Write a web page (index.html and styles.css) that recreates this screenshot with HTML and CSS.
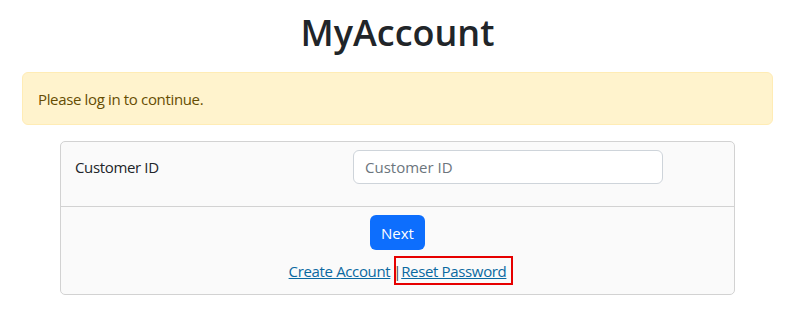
FILE: index.html
```html
<!DOCTYPE html>
<html lang="en">
<head>
<meta charset="utf-8">
<title>MyAccount</title>
<link rel="stylesheet" href="styles.css">
</head>
<body>
<div class="container">
  <h1 class="title">MyAccount</h1>
  <div class="alert">Please log in to continue.</div>
  <div class="card">
    <div class="card-header">
      <label class="field-label" for="cid">Customer ID</label>
      <input class="field-input" id="cid" type="text" placeholder="Customer ID">
    </div>
    <div class="card-footer">
      <button class="btn" type="button">Next</button>
      <div class="links">
        <a href="#" class="link">Create Account</a>
        <span class="highlight"><span class="sep">|</span><a href="#" class="link">Reset Password</a></span>
      </div>
    </div>
  </div>
</div>
</body>
</html>
```
FILE: styles.css
```css
* { box-sizing: border-box; }
html, body { margin: 0; padding: 0; background: #fff; }
body {
  font-family: "Open Sans", "Noto Sans", sans-serif;
  font-size: 15px;
  letter-spacing: -0.35px;
  color: #212529;
}
.container {
  padding: 0 22px 0 22px;
  width: 795px;
}
.title {
  margin: 9px 0 15px;
  height: 48px;
  line-height: 48px;
  text-align: center;
  font-size: 36px;
  font-weight: 600;
  letter-spacing: 0;
  color: #212529;
}
.alert {
  height: 53px;
  display: flex;
  align-items: center;
  padding: 0 15px;
  background: #fff3cd;
  border: 1px solid #ffecb5;
  border-radius: 6px;
  color: #664d03;
}
.card {
  width: 675px;
  margin: 16px auto 0;
  background: #fafafa;
  border: 1px solid #d2d2d2;
  border-radius: 5px;
}
.card-header {
  height: 65px;
  display: grid;
  grid-template-columns: 278px 310px;
  align-items: center;
  align-content: start;
  padding: 8px 14px 0 14px;
  border-bottom: 1px solid #d2d2d2;
}
.field-label { color: #212529; }
.field-input {
  height: 34px;
  width: 310px;
  padding: 0 11px;
  font: inherit;
  color: #212529;
  background: #fff;
  border: 1px solid #ced4da;
  border-radius: 6px;
}
.field-input::placeholder { color: #6c757d; }
.card-footer {
  display: flex;
  flex-direction: column;
  align-items: center;
  padding: 8px 0 9px;
}
.btn {
  width: 55px;
  height: 35px;
  font: inherit;
  letter-spacing: 0;
  color: #fff;
  background: #0d6efd;
  border: none;
  border-radius: 6px;
  padding: 0;
}
.links {
  margin-top: 6px;
  margin-left: 7px;
  display: flex;
  align-items: center;
  color: #444;
}
.link {
  color: #0a69a1;
  text-decoration: underline;
}
.links > .link { margin-right: 4px; }
.highlight {
  display: inline-block;
  border: 2px solid #e60000;
  padding: 1px 5px 0 0;
  height: 29px;
  line-height: 24px;
}
.sep {
  margin-left: -3px;
  margin-right: 0;
}
```
